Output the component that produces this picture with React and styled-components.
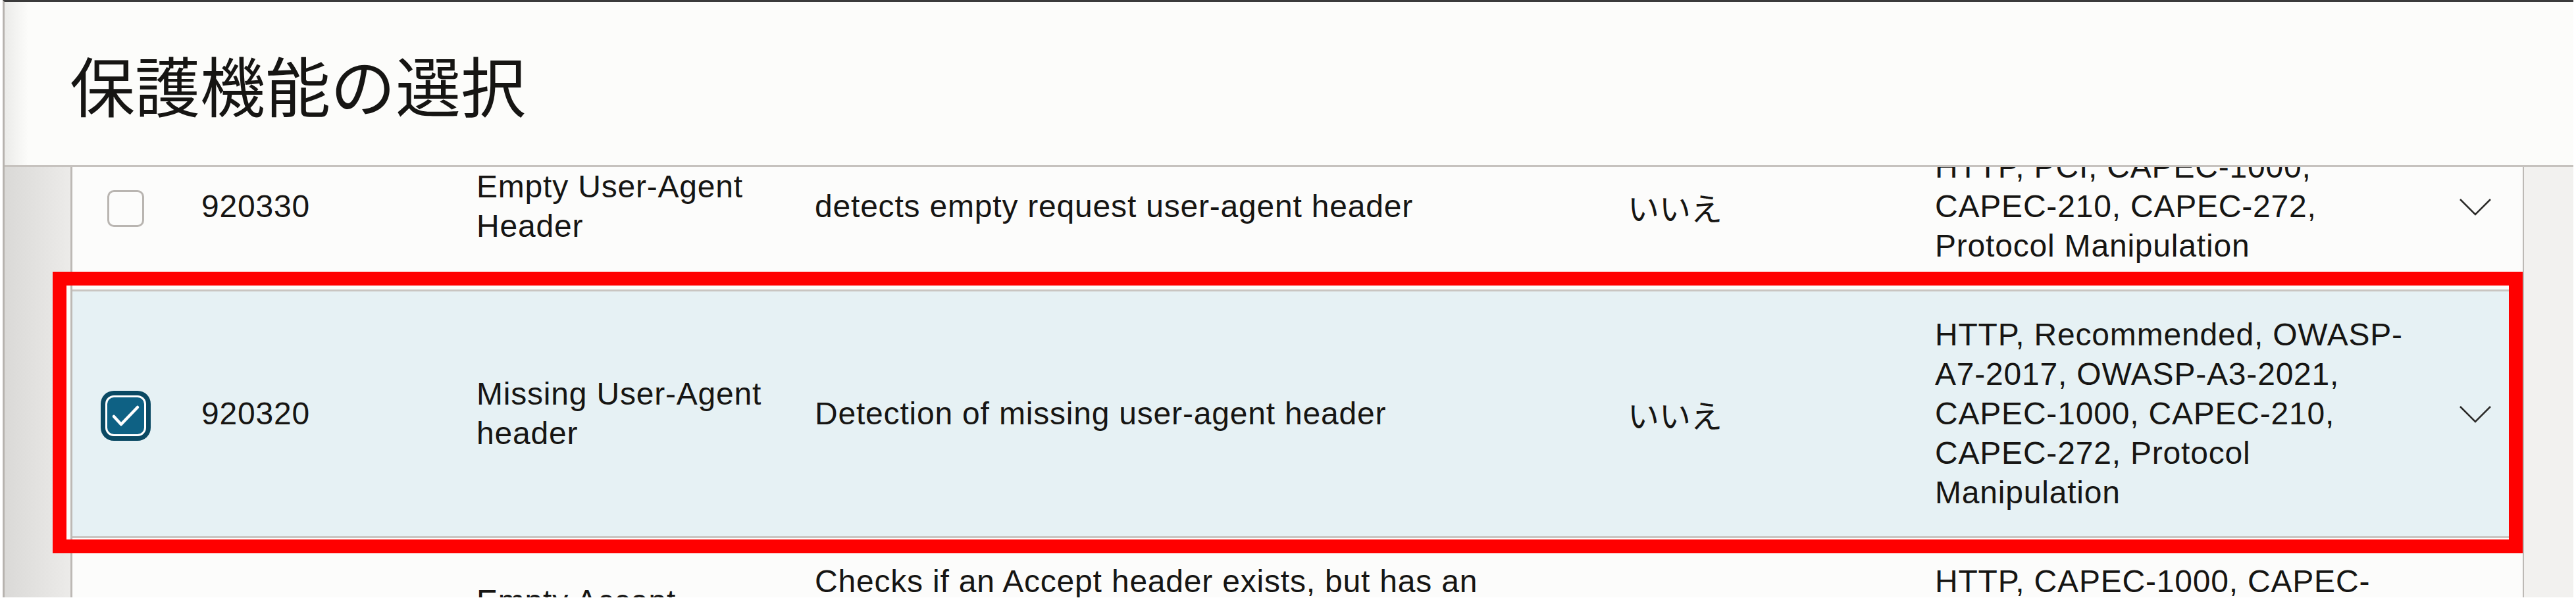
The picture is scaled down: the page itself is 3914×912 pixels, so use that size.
import React from 'react'
import styled, { createGlobalStyle } from 'styled-components'

const GlobalStyle = createGlobalStyle`
  html, body {
    margin: 0;
    padding: 0;
    background: #ffffff;
  }
  body {
    font-family: "Liberation Sans", "Noto Sans CJK JP", sans-serif;
    color: #161513;
  }
`

const Frame = styled.div`
  position: relative;
  width: 3906px;
  height: 908px;
  margin-left: 4px;
  box-sizing: border-box;
  border-top: 3px solid #3b3b3b;
  border-left: 3px solid #b7b3af;
  display: flex;
  flex-direction: column;
  overflow: hidden;
`

const Header = styled.header`
  flex: 0 0 auto;
  height: 251px;
  box-sizing: border-box;
  border-bottom: 3px solid #c6c2be;
  background: linear-gradient(to right, #ebebe9 0, #fcfcfa 36px);
  display: flex;
  align-items: center;
  padding-left: 99px;
`

const Title = styled.h1`
  margin: 0;
  font-family: "Noto Sans CJK JP", sans-serif;
  font-size: 99px;
  font-weight: 400;
  line-height: 1;
  color: #161513;
`

const Body = styled.div`
  flex: 1;
  min-height: 0;
  display: flex;
  overflow: hidden;
`

const Gutter = styled.div`
  flex: 0 0 100px;
  border-right: 3px solid #bdb9b5;
  background: linear-gradient(to right, #dad9d7, #ecebe9);
`

const Viewport = styled.div`
  flex: 1;
  min-width: 0;
  overflow: hidden;
`

const RightStrip = styled.div`
  flex: 0 0 75px;
  border-left: 2px solid #bdb9b5;
  background: #f2f1ef;
`

// the list is scrolled a little, so the first row runs under the header
const Table = styled.div`
  margin-top: -66px;
`

const Row = styled.div`
  display: grid;
  grid-template-columns: 196px 418px 514px 1235px 467px 796px 1fr;
  align-items: center;
  padding: 36px 0;
  border-bottom: 3px solid #c9c5c1;
  background: ${(p) => (p.$selected ? '#e6f1f4' : '#fcfcfb')};
  font-size: 48px;
  line-height: 60px;
  letter-spacing: 0.8px;
`

const Cell = styled.div`
  max-width: ${(p) => p.$max || 'none'};
`

const Jp = styled.div`
  font-family: "Noto Sans CJK JP", sans-serif;
  font-size: 48px;
  line-height: 60px;
  letter-spacing: 0;
`

const Box = styled.span`
  display: block;
  width: 56px;
  height: 56px;
  margin-left: 53px;
  margin-top: 6px;
  box-sizing: border-box;
  border-radius: 10px;
  border: ${(p) => (p.$checked ? 'none' : '3px solid #b9b5b1')};
  background: ${(p) => (p.$checked ? '#0e6184' : '#fcfcfb')};
  box-shadow: ${(p) =>
    p.$checked ? '0 0 0 3px #ffffff, 0 0 0 10px #0a4963' : 'none'};

  svg {
    display: block;
  }
`

const Chevron = styled.svg`
  display: block;
  width: 50px;
  height: 28px;
`

const Highlight = styled.div`
  position: absolute;
  left: 73px;
  top: 410px;
  width: 3753px;
  height: 428px;
  box-sizing: border-box;
  border: 21px solid #ff0000;
  box-shadow: inset 6px 0 0 #fcfcfa;
  pointer-events: none;
`

const rows = [
  {
    id: '920330',
    name: 'Empty User-Agent Header',
    desc: 'detects empty request user-agent header',
    tags: 'HTTP, PCI, CAPEC-1000, CAPEC-210, CAPEC-272, Protocol Manipulation',
  },
  {
    id: '920320',
    name: 'Missing User-Agent header',
    desc: 'Detection of missing user-agent header',
    tags:
      'HTTP, Recommended, OWASP-A7-2017, OWASP-A3-2021, CAPEC-1000, CAPEC-210, CAPEC-272, Protocol Manipulation',
    checked: true,
  },
  {
    id: '920310',
    name: 'Empty Accept Header',
    desc: 'Checks if an Accept header exists, but has an empty value. This is unusual for browser traffic and can indicate a scripted client.',
    tags: 'HTTP, CAPEC-1000, CAPEC-153, CAPEC-267, Protocol Violation',
  },
]

function Checkbox({ checked }) {
  return (
    <Box $checked={checked}>
      {checked && (
        <svg width="56" height="56" viewBox="0 0 56 56">
          <polyline
            points="10,29 21,41 46,15"
            fill="none"
            stroke="#ffffff"
            strokeWidth="4.5"
            strokeLinecap="round"
            strokeLinejoin="round"
          />
        </svg>
      )}
    </Box>
  )
}

function RuleRow({ row }) {
  return (
    <Row $selected={row.checked}>
      <Cell>
        <Checkbox checked={row.checked} />
      </Cell>
      <Cell>{row.id}</Cell>
      <Cell $max="455px">{row.name}</Cell>
      <Cell $max="1090px">{row.desc}</Cell>
      <Jp>いいえ</Jp>
      <Cell $max="740px">{row.tags}</Cell>
      <Cell>
        <Chevron viewBox="0 0 50 28">
          <polyline
            points="2,3 25,26 48,3"
            fill="none"
            stroke="#2b2a28"
            strokeWidth="2.5"
          />
        </Chevron>
      </Cell>
    </Row>
  )
}

export default function App() {
  return (
    <>
      <GlobalStyle />
      <Frame>
        <Header>
          <Title>保護機能の選択</Title>
        </Header>
        <Body>
          <Gutter />
          <Viewport>
            <Table>
              {rows.map((r) => (
                <RuleRow key={r.id} row={r} />
              ))}
            </Table>
          </Viewport>
          <RightStrip />
        </Body>
        <Highlight />
      </Frame>
    </>
  )
}
